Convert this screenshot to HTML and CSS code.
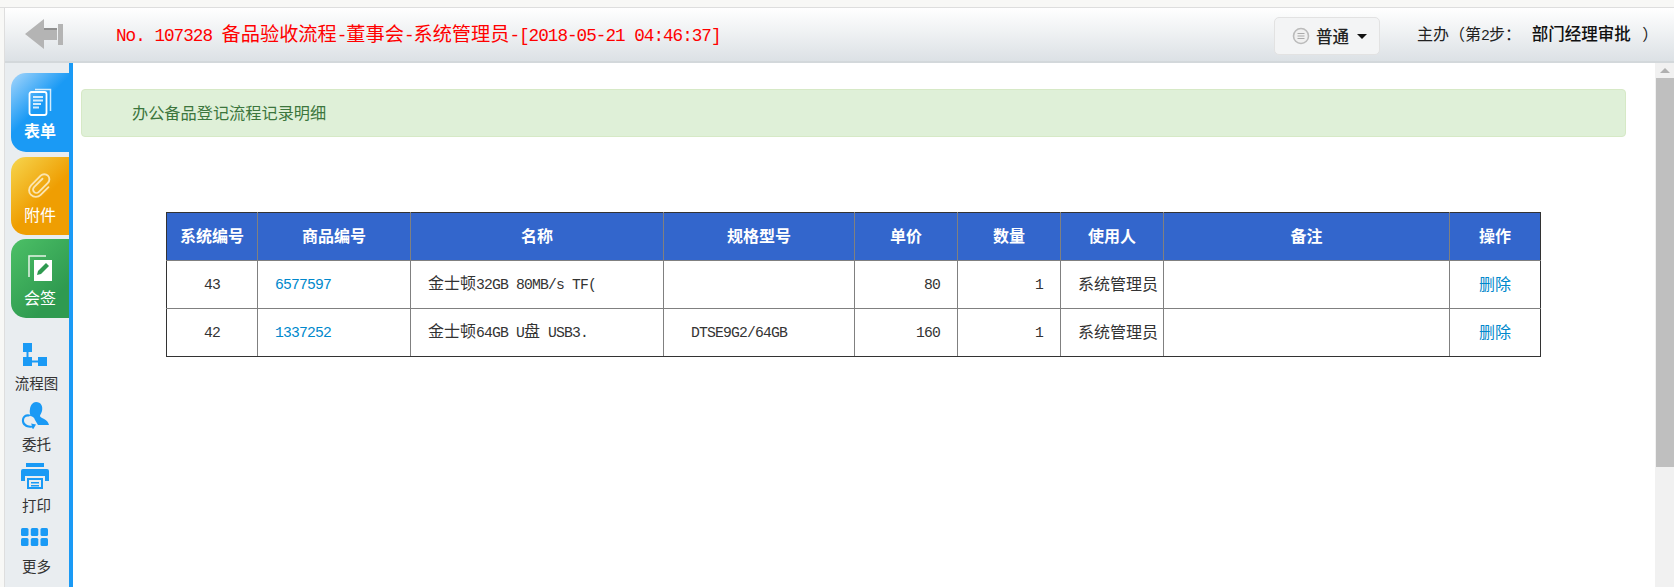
FILE: index.html
```html
<!DOCTYPE html>
<html lang="zh">
<head>
<meta charset="utf-8">
<title>备品验收流程</title>
<link rel="stylesheet" href="styles.css">
</head>
<body>
<div class="strip"></div>
<div class="frame">
  <header class="header">
    <svg class="back" width="40" height="30" viewBox="0 0 40 30"><path d="M1 15 20 0V9H33V21H20V30Z" fill="#b4b4b4"/><path d="M20 9H33V11H20Z" fill="#8f8f8f"/><rect x="34" y="5" width="5" height="21" fill="#b4b4b4"/></svg>
    <h1 class="title"><span class="m">No. 107328 </span>备品验收流程<span class="m">-</span>董事会<span class="m">-</span>系统管理员<span class="m">-[2018-05-21 04:46:37]</span></h1>
    <button class="level">
      <svg width="18" height="18" viewBox="0 0 18 18"><circle cx="9" cy="9" r="7.500" fill="#f0f0f0" stroke="#bbb" stroke-width="1.600"/><path d="M5.500 6.500h7M5.500 9h7M5.500 11.500h7" stroke="#aaa"/></svg>
      <span>普通</span><i class="caret"></i>
    </button>
    <div class="step">主办（第<span class="m">2</span>步： <b>部门经理审批</b> ）</div>
  </header>
  <div class="body">
    <nav class="side">
      <a class="tab blue">
        <svg width="24" height="28" viewBox="0 0 24 28" fill="none" stroke="#fff"><path d="M7 1.500H22.500V23" stroke-width="1.500" opacity=".8"/><rect x="1.500" y="4" width="17" height="23" rx="2" stroke-width="1.800"/><path d="M5 9h10M5 12.500h10M5 16h8M5 19.500h6" stroke-width="2" opacity=".8"/></svg>
        <b>表单</b>
      </a>
      <a class="tab orange">
        <svg width="28" height="28" viewBox="0 0 28 28" fill="none" stroke="#fbe5b0" stroke-width="2.200" stroke-linecap="round"><g transform="rotate(45 14 14) translate(3.800 2) scale(.85)"><path d="M8 6V20a4 4 0 0 0 8 0V5a6 6 0 0 0-12 0V21a8 8 0 0 0 16 0V8"/></g></svg>
        <span>附件</span>
      </a>
      <a class="tab green">
        <svg width="24" height="27" viewBox="0 0 24 27"><path d="M1 22V1H18" fill="none" stroke="#e6f4e8" stroke-width="1.500"/><rect x="6" y="5" width="18" height="21" fill="#fff"/><path d="M9 20 10 16 18 8 21 11 13 19Z" fill="#2f9a50"/></svg>
        <span>会签</span>
      </a>
      <a class="tool">
        <svg width="24" height="27" viewBox="0 0 24 27" fill="#1a9af5"><rect y="2" width="9" height="9"/><rect y="16" width="9" height="9"/><rect x="15" y="16" width="9" height="9"/><path d="M3.500 11h2v5h-2ZM9 19.500h6v2H9Z"/></svg>
        <span>流程图</span>
      </a>
      <a class="tool">
        <svg width="28" height="27" viewBox="0 0 28 27" fill="#1a9af5"><path d="M15 0c5 0 7 4 6 9-.5 2-2 4-2 5 0 2 8 3 9 9H17l-3-5c-1-3-3-4-5-4 1-1-1-3 0-7 .5-4 3-7 6-7Z"/><path d="M1 17c1-4 5-6 9-4l-2 1.500c-3-.5-5 1-5 4 0 3 4 6 8 5l-1-2 5 1-3 5-1-2c-5 1-11-2-10-8Z"/></svg>
        <span>委托</span>
      </a>
      <a class="tool">
        <svg width="28" height="27" viewBox="0 0 28 27" fill="#1a9af5"><rect x="5" y="0" width="18" height="4"/><path d="M2 6H26A2 2 0 0 1 28 8V18H24V13H4V18H0V8A2 2 0 0 1 2 6Z"/><path d="M6 15H22V26H6ZM8 17V24H20V17Z" fill-rule="evenodd"/><path d="M10 19h8v1.500h-8zM10 22h8v1.500h-8z"/></svg>
        <span>打印</span>
      </a>
      <a class="tool">
        <svg width="27" height="27" viewBox="0 0 27 27" fill="#1a9af5"><rect y="4" width="7.500" height="8" rx="1.500"/><rect x="9.800" y="4" width="7.500" height="8" rx="1.500"/><rect x="19.500" y="4" width="7.500" height="8" rx="1.500"/><rect y="14" width="7.500" height="8" rx="1.500"/><rect x="9.800" y="14" width="7.500" height="8" rx="1.500"/><rect x="19.500" y="14" width="7.500" height="8" rx="1.500"/></svg>
        <span>更多</span>
      </a>
    </nav>
    <main class="main">
      <div class="alert">办公备品登记流程记录明细</div>
      <table class="grid">
        <colgroup>
          <col class="c1"><col class="c2"><col class="c3"><col class="c4"><col class="c5"><col class="c6"><col class="c7"><col class="c8"><col class="c9">
        </colgroup>
        <thead>
          <tr><th>系统编号</th><th>商品编号</th><th>名称</th><th>规格型号</th><th>单价</th><th>数量</th><th>使用人</th><th>备注</th><th>操作</th></tr>
        </thead>
        <tbody>
          <tr>
            <td class="ctr"><span class="m">43</span></td>
            <td class="lft"><a class="link m">6577597</a></td>
            <td class="lft">金士顿<span class="m">32GB 80MB/s TF(</span></td>
            <td class="spec"></td>
            <td class="num"><span class="m">80</span></td>
            <td class="num"><span class="m">1</span></td>
            <td class="lft user">系统管理员</td>
            <td></td>
            <td class="ctr"><a class="link">删除</a></td>
          </tr>
          <tr>
            <td class="ctr"><span class="m">42</span></td>
            <td class="lft"><a class="link m">1337252</a></td>
            <td class="lft">金士顿<span class="m">64GB U</span>盘<span class="m"> USB3.</span></td>
            <td class="spec"><span class="m">DTSE9G2/64GB</span></td>
            <td class="num"><span class="m">160</span></td>
            <td class="num"><span class="m">1</span></td>
            <td class="lft user">系统管理员</td>
            <td></td>
            <td class="ctr"><a class="link">删除</a></td>
          </tr>
        </tbody>
      </table>
    </main>
    <div class="scroll"><i class="arrow"></i><div class="thumb"></div></div>
  </div>
</div>
</body>
</html>
```
FILE: styles.css
```css
* { box-sizing: border-box; }
html, body { height: 100%; }
body {
  margin: 0;
  display: flex;
  flex-direction: column;
  overflow: hidden;
  background: #f8f8f6;
  color: #333;
  font: 16px/1.2 "Noto Sans CJK SC", sans-serif;
}
.m { font-family: "Liberation Mono", monospace; font-size: .92em; letter-spacing: -.0565em; white-space: pre; }
.strip { height: 8px; flex: none; background: #f8f8f6; border-bottom: 1px solid #dedede; }
.frame { flex: 1; min-height: 0; margin-left: 4px; border-left: 1px solid #dedede; display: flex; flex-direction: column; }

.header {
  flex: none;
  height: 55px;
  display: flex;
  align-items: center;
  background: linear-gradient(#fff, #dce1e5);
  border-bottom: 2px solid #d3d8db;
}
.back { margin: 0 0 2px 19px; flex: none; }
.title { margin: 0 0 0 52px; flex: 1; font-size: 19.200px; font-weight: 400; color: #f00; white-space: nowrap; }
.level {
  flex: none;
  width: 106px;
  height: 38px;
  margin: 3px 37px 0 0;
  display: flex;
  align-items: center;
  gap: 6px;
  padding: 0 0 0 17px;
  background: #f3f4f5;
  border: 1px solid #e2e2e2;
  border-radius: 5px;
  color: #222;
  font: 500 16.500px "Noto Sans CJK SC", sans-serif;
}
.caret { margin-left: 2px; border: 5px solid transparent; border-top-color: #111; border-bottom: 0; }
.step { flex: none; width: 257px; color: #222; font-size: 16px; white-space: pre; }
.step b { color: #111; font-size: 16.500px; font-weight: 500; margin: 0 8px 0 7px; }

.body { flex: 1; min-height: 0; display: flex; }
.side {
  flex: none;
  width: 68px;
  padding: 10px 0 0 6px;
  display: flex;
  flex-direction: column;
  background: #e9edf0;
  border-right: 4px solid #1a9af5;
  color: #fff;
}
.tab {
  flex: none;
  width: 58px;
  height: 79px;
  margin-bottom: 5px;
  padding-top: 15px;
  display: flex;
  flex-direction: column;
  align-items: center;
  border-radius: 15px 0 0 15px;
  font-size: 16px;
  line-height: 22px;
}
.tab b { font-weight: 700; margin-top: 3px; }
.tab span { margin-top: 3px; }
.blue { background: linear-gradient(135deg, #a6d6fb, #1a9af5 45%); }
.orange { height: 78px; margin-bottom: 4px; background: linear-gradient(135deg, #f6d64f, #ef9e02 55%); }
.green { padding-top: 16px; background: linear-gradient(135deg, #4cc066, #2f9a50 75%); margin-bottom: 23px; }
.green span { margin-top: 4px; }
.tool {
  flex: none;
  margin-left: -6px;
  padding-right: 1px;
  height: 61px;
  display: flex;
  flex-direction: column;
  align-items: center;
  color: #333;
  font-size: 14.500px;
  line-height: 20px;
}
.tool svg { margin: 0 4px 5px 0; flex: none; }

.main { flex: 1; min-width: 0; background: #fff; padding: 26px 29px 0 8px; }
.alert {
  height: 48px;
  padding-left: 50px;
  line-height: 44px;
  background: #dff0d8;
  border: 1px solid #d6e9c6;
  border-radius: 4px;
  color: #3c763d;
  font-size: 16.200px;
}
.grid {
  margin: 75px 0 0 85px;
  width: 1374px;
  table-layout: fixed;
  border-collapse: collapse;
  border: 1px solid #333;
}
.c1 { width: 91px; } .c2 { width: 153px; } .c3 { width: 253px; } .c4 { width: 191px; }
.c5 { width: 103px; } .c6 { width: 103px; } .c7 { width: 103px; } .c8 { width: 286px; } .c9 { width: 91px; }
.grid th, .grid td { height: 48px; padding: 0 0 2px; border: 1px solid #808080; font-size: 16px; }
.grid thead th { background: #3366cc; color: #fff; font-weight: 700; border-top-color: #333; }
.grid tr > :first-child { border-left-color: #333; }
.grid tr > :last-child { border-right-color: #333; }
.grid tbody tr:last-child td { border-bottom-color: #333; }
.ctr { text-align: center; }
.lft { padding-left: 17px !important; white-space: nowrap; }
.num { text-align: right; padding-right: 17px !important; }
.spec { padding-left: 27px !important; }
.link { color: #0088cc; }

.scroll { flex: none; width: 19px; background: #f1f1f1; position: relative; }
.arrow { position: absolute; left: 5px; top: 5px; border: 5px solid transparent; border-bottom: 5px solid #b0b0b0; border-top: 0; }
.thumb { margin: 15px 0 0 1px; height: 389px; background: #bfbfbf; }
```
